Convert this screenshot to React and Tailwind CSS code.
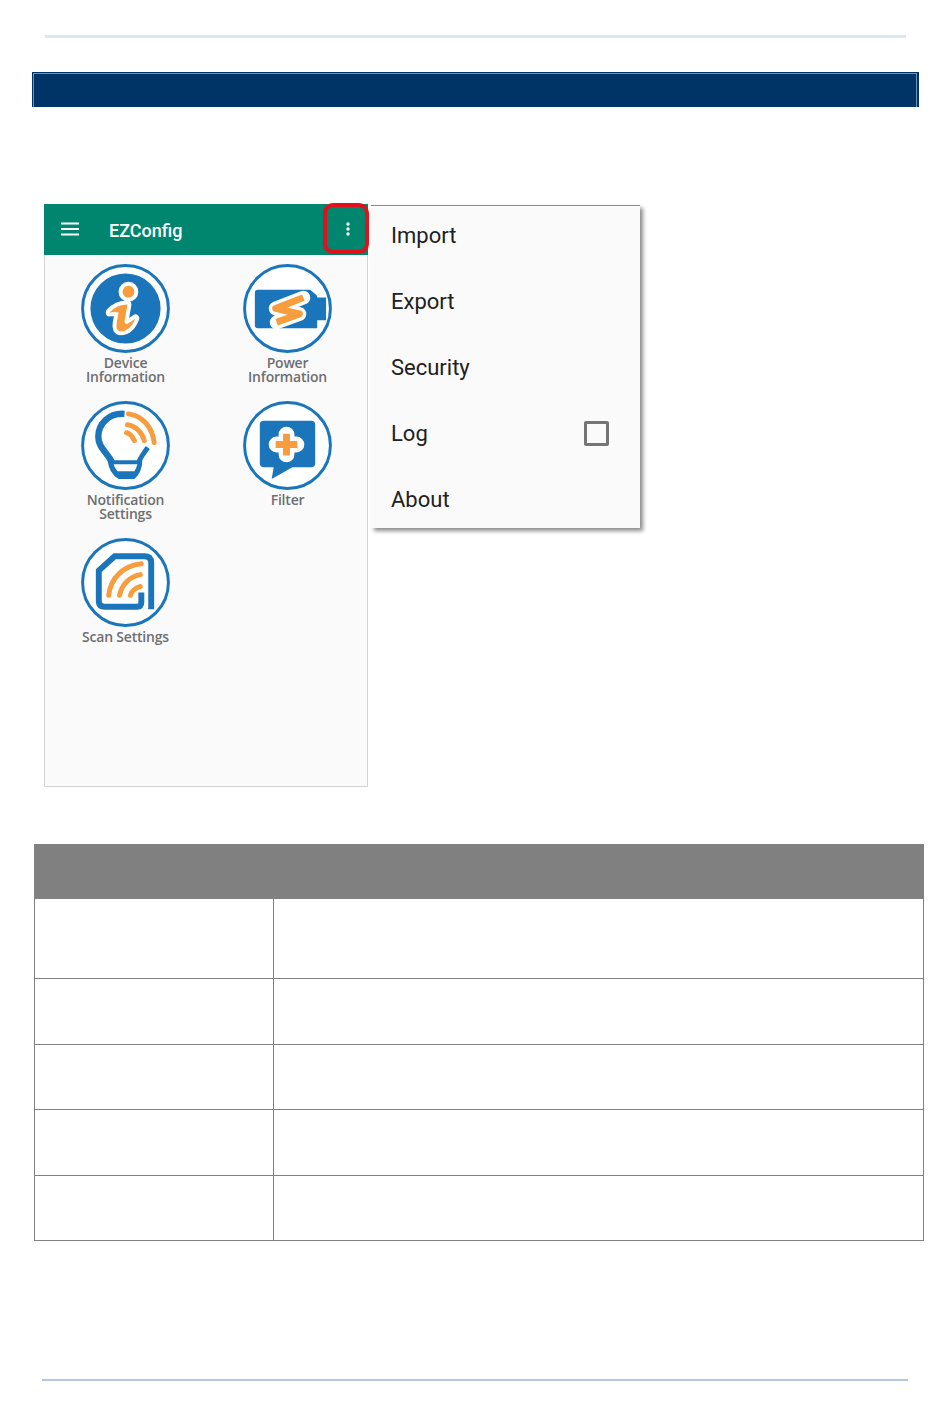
import React from 'react';

const blue = '#1b75bb';
const orange = '#f79d3d';

const stem = 'M29 49 Q36 41 47 41 L44 58 Q44 62 48 60 L55 55 Q50 68 40 68 Q35 68 36 60 L38 49 Q34 48 29 49 Z';
const bolt = 'M61 34 L33 45 L57 50.5 L34 59';

function DeviceIcon() {
  return (
    <>
      <circle cx="45" cy="45" r="35.5" fill={blue} />
      <circle cx="48" cy="28" r="10" fill="#fff" />
      <path d={stem} fill="#fff" stroke="#fff" strokeWidth="8" strokeLinejoin="round" />
      <circle cx="48" cy="28" r="6" fill={orange} />
      <path d={stem} fill={orange} />
    </>
  );
}

function PowerIcon() {
  return (
    <>
      <path d="M15 26 H68 L75 32 V34 H84 V57 H75 V65 H15 Q12 65 12 62 V29 Q12 26 15 26 Z" fill={blue} />
      <path d={bolt} fill="none" stroke="#fff" strokeWidth="14" strokeLinejoin="round" strokeLinecap="round" />
      <path d={bolt} fill="none" stroke={orange} strokeWidth="7" strokeLinejoin="round" />
    </>
  );
}

function BulbIcon() {
  return (
    <>
      <path d="M44 13 C28 12 17.5 23 17.5 36 C17.5 46 24 50 29 58 Q31 61 32 64" fill="none" stroke={blue} strokeWidth="6.5" />
      <path d="M67.5 47 L62 55 Q59 59 58 64" fill="none" stroke={blue} strokeWidth="5" />
      <path d="M27 60 H62 Q62 72 54 79 H38 Q28 73 27 60 Z" fill={blue} />
      <path d="M33 64 H57 Q56 68 54 71 H37 Q34 68 33 64 Z" fill="#fff" />
      <path d="M48 13 C62 15 72 26 74 42" fill="none" stroke={orange} strokeWidth="5" strokeLinecap="round" />
      <path d="M47 24 C55 25 62 32 64 40" fill="none" stroke={orange} strokeWidth="5" strokeLinecap="round" />
      <path d="M46 32 C50 33 52 36 54 40" fill="none" stroke={orange} strokeWidth="5" strokeLinecap="round" />
    </>
  );
}

function FilterIcon() {
  return (
    <>
      <path d="M21 20 H69 Q73 20 73 24 V63 Q73 67 69 67 H50 L29 79 L31 67 H21 Q17 67 17 63 V24 Q17 20 21 20 Z" fill={blue} />
      <path d="M44 34 V54 M34 44 H54" stroke="#fff" strokeWidth="16" strokeLinecap="round" />
      <path d="M44 33 V55 M33 44 H55" stroke={orange} strokeWidth="7" />
    </>
  );
}

function ScanIcon() {
  return (
    <>
      <path d="M71 72 V25 Q71 18.5 64 18.5 H34 L18 33 V64 Q18 69.5 24 69.5 H57 Q61 69.5 61 65 V55" fill="none" stroke={blue} strokeWidth="6" />
      <path d="M28 58 C30 40 43 28 61 26" fill="none" stroke={orange} strokeWidth="5" strokeLinecap="round" />
      <path d="M39 58 C41 47 49 39 60 37" fill="none" stroke={orange} strokeWidth="5" strokeLinecap="round" />
      <path d="M50 58 C51 54 55 50 60 49" fill="none" stroke={orange} strokeWidth="5" strokeLinecap="round" />
    </>
  );
}

const tiles = [
  { icon: <DeviceIcon />, label: ['Device', 'Information'] },
  { icon: <PowerIcon />, label: ['Power', 'Information'] },
  { icon: <BulbIcon />, label: ['Notification', 'Settings'] },
  { icon: <FilterIcon />, label: ['Filter'] },
  { icon: <ScanIcon />, label: ['Scan Settings'] },
];

const rowHeights = ['h-[79px]', 'h-[66px]', 'h-[65px]', 'h-[66px]', 'h-[65px]'];

function Tile({ icon, label }) {
  return (
    <div className="flex flex-col items-center">
      <svg width="89" height="89" viewBox="0 0 90 90" className="shrink-0">
        <circle cx="45" cy="45" r="43.4" fill="#fff" stroke={blue} strokeWidth="3" />
        {icon}
      </svg>
      <div className="mt-[3px] text-center font-['Open_Sans',sans-serif] font-semibold text-[14px] leading-[14px] tracking-[-0.2px] text-[#6d6e71]">
        {label.map((line) => <div key={line}>{line}</div>)}
      </div>
    </div>
  );
}

export default function App() {
  return (
    <div className="w-[950px] h-[1419px] bg-white pt-[35px] font-['Roboto',sans-serif] overflow-hidden">
      <div className="ml-[45px] w-[861px] h-[3px] bg-[#dbe6f2]"></div>

      <div className="mt-[34px] ml-[32px] w-[887px] h-[35px] bg-[#003366] pt-px pl-px pr-[2px]">
        <div className="h-full border-t border-l border-r border-[#6f93b8]"></div>
      </div>

      <div className="mt-[97px] ml-[44px] flex items-start">
        <div className="w-[324px] h-[583px] flex flex-col">
          <div className="relative h-[51px] bg-[#00856f] flex items-center shrink-0">
            <svg width="18" height="14" viewBox="0 0 18 14" className="ml-[17px] -mt-[2px]">
              <path d="M0 1.5 H18 M0 7 H18 M0 12.5 H18" stroke="#fff" strokeWidth="2" />
            </svg>
            <span className="ml-[30px] mt-[2px] text-white font-medium text-[18px]">EZConfig</span>
            <div className="absolute left-[279px] -top-[1px] w-[46px] h-[51px] border-[4px] border-[#e2101a] rounded-[10px] flex items-center justify-center">
              <svg width="4" height="14" viewBox="0 0 4 14" className="ml-[3px]">
                <circle cx="2" cy="2" r="1.7" fill="#fff" />
                <circle cx="2" cy="7" r="1.7" fill="#fff" />
                <circle cx="2" cy="12" r="1.7" fill="#fff" />
              </svg>
            </div>
          </div>
          <div className="flex-1 border border-t-0 border-[#d4d4d4] bg-[#fafafa] pt-[9px] grid grid-cols-[161px_161px] gap-x-px auto-rows-[137px]">
            {tiles.map((tile) => <Tile key={tile.label[0]} icon={tile.icon} label={tile.label} />)}
          </div>
        </div>

        <div className="ml-[3px] mt-px w-[269px] h-[323px] bg-[#fafafa] border-t border-[#8a8a8a] shadow-[3px_3px_4px_rgba(0,0,0,0.45)] pt-[14px] pl-[20px] pr-[31px] flex flex-col gap-[34px] text-[22px] leading-[32px] text-[#212121]">
          <div>Import</div>
          <div>Export</div>
          <div>Security</div>
          <div className="flex items-center justify-between">
            <span>Log</span>
            <div className="w-[25px] h-[25px] border-[3px] border-[#757575] rounded-[2px] -mt-[2px]"></div>
          </div>
          <div>About</div>
        </div>
      </div>

      <div className="mt-[57px] ml-[34px] w-[890px] border-x border-b border-[#808080]">
        <div className="h-[55px] bg-[#808080]"></div>
        {rowHeights.map((height, i) => (
          <div key={i} className={`${height} flex ${i > 0 ? 'border-t border-[#808080]' : ''}`}>
            <div className="w-[239px] h-full border-r border-[#808080]"></div>
            <div className="flex-1"></div>
          </div>
        ))}
      </div>

      <div className="mt-[138px] ml-[42px] w-[866px] h-[2px] bg-[#b4c6e0]"></div>
    </div>
  );
}
